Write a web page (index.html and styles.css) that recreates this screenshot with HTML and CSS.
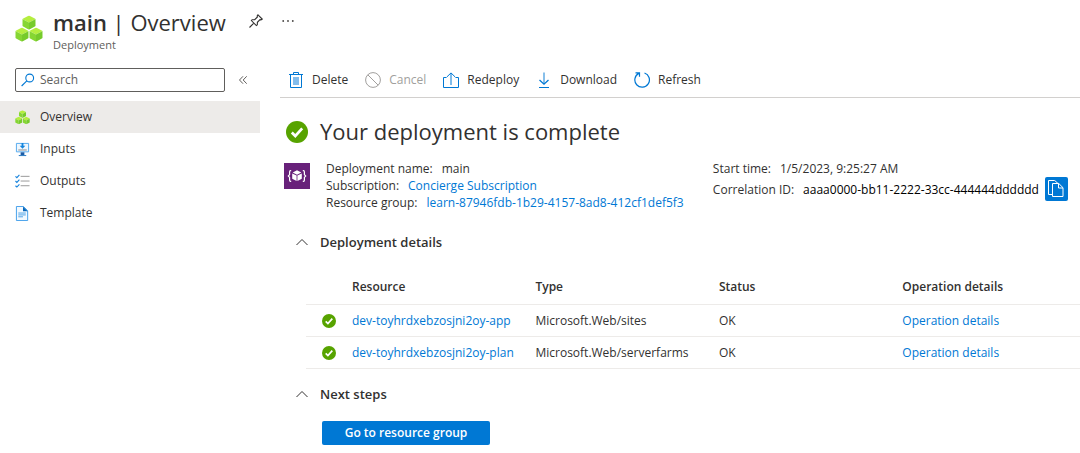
FILE: index.html
```html
<!DOCTYPE html>
<html lang="en">
<head>
<meta charset="utf-8">
<meta name="viewport" content="width=device-width, initial-scale=1">
<title>main | Overview</title>
<link rel="stylesheet" href="styles.css">
</head>
<body>
<svg class="defs" aria-hidden="true">
  <symbol id="cube" viewBox="0.8 0.3 12.4 13.5" preserveAspectRatio="none">
    <path d="M7 0.300 13.200 3.500 7 6.900 0.800 3.500z" fill="#b5ee3f"/>
    <path d="M0.800 3.500 7 6.900V13.800L0.800 10.300z" fill="#86d633"/>
    <path d="M13.200 3.500 7 6.900V13.800L13.200 10.300z" fill="#76cb2b"/>
  </symbol>
  <symbol id="cubes" viewBox="0 0 28 28">
    <use href="#cube" x="7.300" y="0.600" width="13.400" height="14.200"/>
    <use href="#cube" x="0.300" y="12.600" width="13.400" height="14.200"/>
    <use href="#cube" x="14.300" y="12.600" width="13.400" height="14.200"/>
  </symbol>
  <symbol id="check" viewBox="0 0 22 22">
    <circle cx="11" cy="11" r="11" fill="#57a300"/>
    <path d="M5.800 11.500 9.300 15 16.200 7.300" fill="none" stroke="#fff" stroke-width="2.700"/>
  </symbol>
  <symbol id="chevron" viewBox="0 0 12 8">
    <path d="M0.500 7 6 1.500 11.500 7" fill="none" stroke="#323130"/>
  </symbol>
</svg>

<header class="page-header">
  <svg class="header-icon" aria-hidden="true"><use href="#cubes"/></svg>
  <div class="header-text">
    <h1 class="title"><strong>main</strong> | Overview</h1>
    <p class="subtitle">Deployment</p>
  </div>
  <button class="icon-button" type="button" aria-label="Pin">
    <svg width="14" height="14" viewBox="0 0 14 14" fill="none" stroke="#323130" stroke-width="1.100"><path d="M9 .8 13.200 5 12 5.800 11 5.600 8.400 8.300 8.300 10.800 7.400 11.600 2.400 6.600 3.200 5.700 5.700 5.600 8.400 3 8.200 1.900zM4.800 9.100.5 13.500"/></svg>
  </button>
  <button class="icon-button" type="button" aria-label="More">
    <svg width="12" height="14" viewBox="0 0 12 14" fill="#484644"><circle cx="1.200" cy="7" r=".9"/><circle cx="6" cy="7" r=".9"/><circle cx="10.800" cy="7" r=".9"/></svg>
  </button>
</header>

<div class="layout">
  <aside class="sidebar">
    <div class="search-row">
      <label class="search-box">
        <svg width="14" height="14" viewBox="0 0 14 14" fill="none" stroke="#0078d4" stroke-width="1.100"><circle cx="8.700" cy="5" r="3.900"/><path d="M5.800 7.800.6 13"/></svg>
        <input class="search-input" type="search" placeholder="Search" aria-label="Search">
      </label>
      <button class="icon-button" type="button" aria-label="Collapse menu">
        <svg width="8" height="8" viewBox="0 0 8 8" fill="none" stroke="#605e5c"><path d="M4 .3.5 4 4 7.700M7.700.3 4.200 4 7.700 7.700"/></svg>
      </button>
    </div>
    <nav class="menu">
      <a class="menu-item active" href="#overview">
        <svg class="icon" aria-hidden="true"><use href="#cubes"/></svg>Overview</a>
      <a class="menu-item" href="#inputs">
        <svg class="icon" viewBox="0 0 16 16"><path d="M1.500 1.500h13v9h-13z" fill="#eef7fe" stroke="#50a8ee"/><path d="M7 1h2v3h2L8 7.300 5 4h2z" fill="#1484dc"/><path d="M3.500 8.500h9" stroke="#888"/><path d="M6 11h4v3H6z" fill="#1b5ba5"/><path d="M4 14h8v1H4z" fill="#1b70bd"/></svg>Inputs</a>
      <a class="menu-item" href="#outputs">
        <svg class="icon" viewBox="0 0 16 16" fill="none"><path d="M6 2.500h9.500M6 7.500h9.500M6 12.500h9.500" stroke="#949494"/><path d="M.5 2.500 2 3.900 4.700 1M.5 7.500 2 8.900 4.700 6M.5 12.500 2 13.900 4.700 11" stroke="#1683dd" stroke-width="1.200"/></svg>Outputs</a>
      <a class="menu-item" href="#template">
        <svg class="icon" viewBox="0 0 16 16"><path d="M1.500 .5h7.500l4.500 4.500v10.500h-12z" fill="#f3f9fe" stroke="#3f9dea"/><path d="M8.500 .5V5.500h5z" fill="#0866b8"/><path d="M3.500 7.500h8M3.500 9.500h8M3.500 11.500h5" stroke="#4aa0e6"/></svg>Template</a>
    </nav>
  </aside>

  <main class="main">
    <div class="toolbar">
      <button class="command" type="button">
        <svg class="icon" viewBox="0 0 16 16" fill="none" stroke="#0078d4"><path d="M1 2.500h14M5.500 2V.5h5V2M2.500 2.500v13h11v-13"/><path d="M5 5h6v8H5z" fill="#83bdec" stroke="none"/></svg>Delete</button>
      <button class="command" type="button" disabled>
        <svg class="icon" viewBox="0 0 16 16" fill="none" stroke="#a19f9d"><circle cx="8" cy="8" r="7.400"/><path d="M2.800 2.800 13.200 13.200"/></svg>Cancel</button>
      <button class="command" type="button">
        <svg class="icon" viewBox="0 0 16 16" fill="none" stroke="#0078d4"><path d="M3.500 5.500h-3v10h15v-10h-3"/><path d="M8 13V1M3.800 5 8 .9 12.200 5"/></svg>Redeploy</button>
      <button class="command" type="button">
        <svg class="icon" viewBox="0 0 16 16" fill="none" stroke="#0078d4"><path d="M8 .5v11.500" stroke="#69afe5" stroke-width="1.600"/><path d="M3.500 8 8 12.200 12.500 8" stroke-width="1.300"/><path d="M3 15.500h10"/></svg>Download</button>
      <button class="command" type="button">
        <svg class="icon" viewBox="0 0 16 16" fill="none" stroke="#0078d4" stroke-width="1.200"><path d="M10.500 1A7.300 7.300 0 1 1 4.800 1.400M1.500.8h4v4"/></svg>Refresh</button>
    </div>

    <section class="content">
      <div class="result">
        <svg class="result-icon" aria-hidden="true"><use href="#check"/></svg>
        <h2 class="result-title">Your deployment is complete</h2>
      </div>

      <div class="summary">
        <svg class="summary-icon" viewBox="0 0 26 26"><path d="M0 0h26v26H0z" fill="#68217a"/><path d="M7.200 7.700H6.500Q5.600 7.700 5.600 9v2.600L4.300 13l1.300 1.400V17q0 1.300.9 1.300h.7M18.800 7.700h.7q.9 0 .9 1.300v2.600L21.700 13l-1.300 1.400V17q0 1.300-.9 1.300h-.7" fill="none" stroke="#fff" stroke-width="1.200"/><path d="M13 7.300 17.300 9.500 13 11.700 8.700 9.500zM8.200 10.400 12.600 12.600V18L8.200 15.700zM17.800 10.400 13.400 12.600V18L17.800 15.700z" fill="#fff"/></svg>
        <dl class="facts">
          <div class="fact"><dt>Deployment name:</dt><dd>main</dd></div>
          <div class="fact"><dt>Subscription:</dt><dd><a class="link" href="#subscription">Concierge Subscription</a></dd></div>
          <div class="fact"><dt>Resource group:</dt><dd><a class="link" href="#group">learn-87946fdb-1b29-4157-8ad8-412cf1def5f3</a></dd></div>
        </dl>
        <dl class="facts">
          <div class="fact"><dt>Start time:</dt><dd>1/5/2023, 9:25:27 AM</dd></div>
          <div class="fact"><dt>Correlation ID:</dt><dd class="correlation">aaaa0000-bb11-2222-33cc-444444dddddd
            <button class="copy" type="button" aria-label="Copy">
              <svg width="16" height="18" viewBox="0 0 16 18" fill="#0078d4" stroke="#fff"><path d="M5 14.500H.5V.5h6.200L10 3.500"/><path d="M4.500 3.500h6.300L15 7.700v8.800H4.500z"/><path d="M10.500 3.500V8H15" fill="none"/></svg>
            </button></dd></div>
        </dl>
      </div>

      <button class="section-toggle" type="button" aria-expanded="true">
        <svg class="chevron" aria-hidden="true"><use href="#chevron"/></svg>Deployment details</button>
      <table class="resources">
        <thead>
          <tr><th class="state" aria-label="State"></th><th>Resource</th><th>Type</th><th>Status</th><th>Operation details</th></tr>
        </thead>
        <tbody>
          <tr>
            <td class="state"><svg class="state-icon"><use href="#check"/></svg></td>
            <td><a class="link" href="#app">dev-toyhrdxebzosjni2oy-app</a></td>
            <td>Microsoft.Web/sites</td><td>OK</td>
            <td><a class="link" href="#app-operation">Operation details</a></td>
          </tr>
          <tr>
            <td class="state"><svg class="state-icon"><use href="#check"/></svg></td>
            <td><a class="link" href="#plan">dev-toyhrdxebzosjni2oy-plan</a></td>
            <td>Microsoft.Web/serverfarms</td><td>OK</td>
            <td><a class="link" href="#plan-operation">Operation details</a></td>
          </tr>
        </tbody>
      </table>

      <button class="section-toggle" type="button" aria-expanded="true">
        <svg class="chevron" aria-hidden="true"><use href="#chevron"/></svg>Next steps</button>
      <button class="primary" type="button">Go to resource group</button>
    </section>
  </main>
</div>
</body>
</html>
```
FILE: styles.css
```css
* { box-sizing: border-box; }

body {
  margin: 0;
  background: #fff;
  color: #323130;
  font: 12px/16px "Segoe UI", "Open Sans", "Noto Sans", sans-serif;
}

h1, h2, p, dl, dd { margin: 0; }

button {
  border: 0;
  padding: 0;
  background: none;
  color: inherit;
  font: inherit;
  cursor: pointer;
}

svg { display: block; flex: none; }
.defs { position: absolute; width: 0; height: 0; }
.icon { width: 16px; height: 16px; }
.link { color: #0078d4; text-decoration: none; }
.link:hover { text-decoration: underline; }

.page-header {
  display: flex;
  align-items: flex-start;
  padding: 8px 15px 0;
  height: 64px;
}
.header-icon { width: 28px; height: 28px; margin: 7px 10px 0 0; }
.header-text { margin-right: 14px; }
.title { font-size: 22px; line-height: 28px; font-weight: 400; }
.title strong { font-weight: 600; }
.subtitle { font-size: 11px; line-height: 18px; color: #605e5c; }
.icon-button {
  display: flex;
  align-items: center;
  justify-content: center;
  width: 32px;
  height: 26px;
}

.layout { display: flex; align-items: flex-start; }

.sidebar { flex: none; width: 260px; }
.search-row { display: flex; align-items: center; padding: 3px 0 8px 15px; }
.search-box {
  display: flex;
  flex: none;
  align-items: center;
  gap: 5px;
  width: 210px;
  height: 24px;
  padding: 0 5px;
  border: 1px solid #605e5c;
  border-radius: 2px;
}
.search-input {
  flex: 1;
  min-width: 0;
  border: 0;
  padding: 0;
  outline: 0;
  background: none;
  color: inherit;
  font: inherit;
}
.search-input::placeholder { color: #605e5c; opacity: 1; }
.search-row .icon-button { flex: 1; }

.menu-item {
  display: flex;
  align-items: center;
  gap: 10px;
  height: 32px;
  padding-left: 15px;
  color: inherit;
  text-decoration: none;
}
.menu-item .icon { width: 15px; height: 15px; }
.menu-item.active { background: #edebe9; }

.main { flex: 1; min-width: 0; padding-left: 20px; }
.toolbar {
  display: flex;
  gap: 17px;
  height: 34px;
  padding: 0 8px;
  border-bottom: 1px solid #d2d0ce;
}
.command { display: flex; align-items: center; gap: 8px; height: 32px; }
.command:disabled { color: #a19f9d; cursor: default; }

.result {
  display: flex;
  align-items: center;
  gap: 12px;
  padding: 17px 6px 0;
}
.result-icon { width: 22px; height: 22px; margin-top: 2px; }
.result-title { font-size: 22px; line-height: 32px; font-weight: 400; }

.summary {
  display: grid;
  grid-template-columns: 26px 20fr 19fr;
  padding: 13px 0 0 4px;
}
.summary-icon { width: 26px; height: 26px; margin-top: 3px; }
.facts { line-height: 17px; white-space: nowrap; }
.facts:nth-of-type(1) { padding-left: 16px; }
.facts:nth-of-type(2) { padding-left: 8px; }
.fact { display: flex; align-items: center; gap: 9px; }
.correlation { display: flex; align-items: center; gap: 6px; color: #000; }
.copy {
  display: flex;
  align-items: center;
  justify-content: center;
  width: 23px;
  height: 24px;
  border-radius: 2px;
  background: #0078d4;
}

.section-toggle {
  display: flex;
  align-items: center;
  gap: 12px;
  height: 32px;
  margin: 15px 0 0 16px;
  font-size: 13px;
  font-weight: 600;
}
.chevron { width: 12px; height: 8px; }

.resources {
  width: calc(100% - 26px);
  margin: 10px 0 0 26px;
  border-collapse: collapse;
  table-layout: fixed;
}
.resources th, .resources td {
  height: 32px;
  padding: 2px 0 0;
  border-bottom: 1px solid #edebe9;
  text-align: left;
  white-space: nowrap;
}
.resources th { height: 36px; padding-top: 3px; font-weight: 600; }
.resources th:nth-child(n+2):nth-child(-n+4) { width: 23.7%; }
.resources .state { width: 46px; padding-left: 16px; }
.state-icon { width: 14px; height: 14px; }
.resources + .section-toggle { margin-top: 9px; }

.primary {
  height: 24px;
  min-width: 168px;
  margin: 11px 0 8px 42px;
  padding: 0 20px;
  border-radius: 2px;
  background: #0078d4;
  color: #fff;
  font-weight: 600;
}
```
